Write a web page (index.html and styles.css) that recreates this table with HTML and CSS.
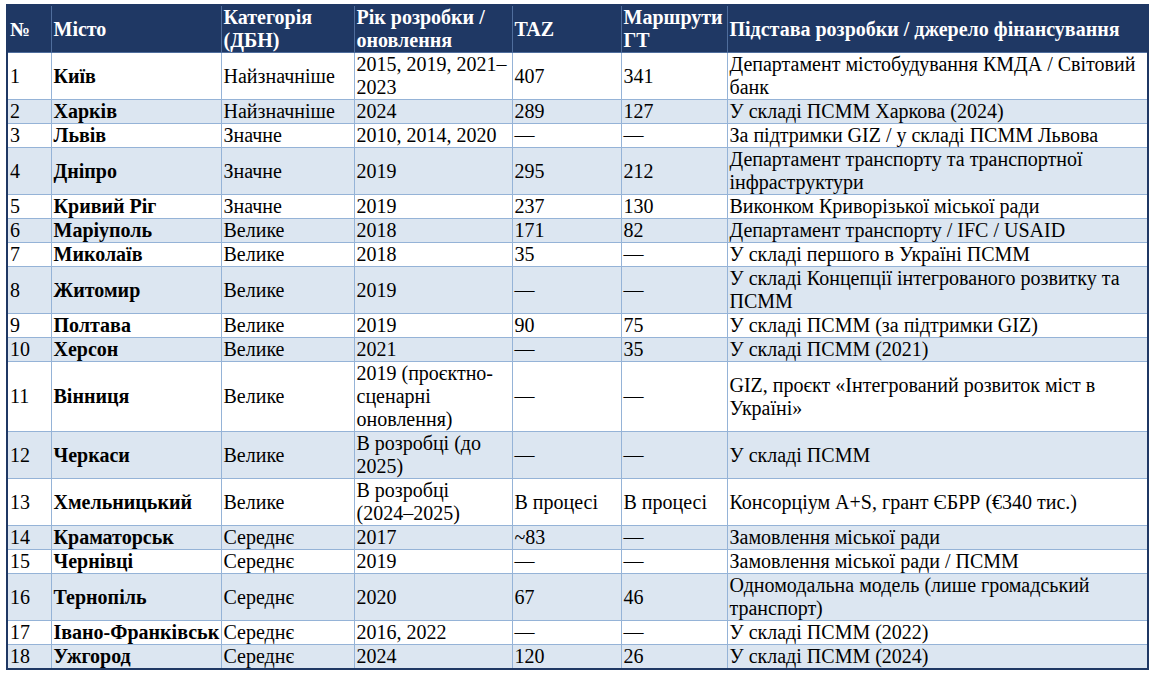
FILE: index.html
```html
<!DOCTYPE html>
<html lang="uk">
<head>
<meta charset="utf-8">
<title>Транспортні моделі міст</title>
<link rel="stylesheet" href="styles.css">
</head>
<body>
<div class="wrap">
<table class="models">
<colgroup>
<col class="c-num"><col class="c-city"><col class="c-cat"><col class="c-year"><col class="c-taz"><col class="c-routes"><col class="c-src">
</colgroup>
<thead>
<tr><th>№</th><th>Місто</th><th>Категорія (ДБН)</th><th>Рік розробки / оновлення</th><th>TAZ</th><th>Маршрути ГТ</th><th>Підстава розробки / джерело фінансування</th></tr>
</thead>
<tbody>
<tr><td>1</td><td class="city">Київ</td><td>Найзначніше</td><td>2015, 2019, 2021–2023</td><td>407</td><td>341</td><td>Департамент містобудування КМДА / Світовий банк</td></tr>
<tr><td>2</td><td class="city">Харків</td><td>Найзначніше</td><td>2024</td><td>289</td><td>127</td><td>У складі ПСММ Харкова (2024)</td></tr>
<tr><td>3</td><td class="city">Львів</td><td>Значне</td><td>2010, 2014, 2020</td><td>—</td><td>—</td><td>За підтримки GIZ / у складі ПСММ Львова</td></tr>
<tr><td>4</td><td class="city">Дніпро</td><td>Значне</td><td>2019</td><td>295</td><td>212</td><td>Департамент транспорту та транспортної інфраструктури</td></tr>
<tr><td>5</td><td class="city">Кривий Ріг</td><td>Значне</td><td>2019</td><td>237</td><td>130</td><td>Виконком Криворізької міської ради</td></tr>
<tr><td>6</td><td class="city">Маріуполь</td><td>Велике</td><td>2018</td><td>171</td><td>82</td><td>Департамент транспорту / IFC / USAID</td></tr>
<tr><td>7</td><td class="city">Миколаїв</td><td>Велике</td><td>2018</td><td>35</td><td>—</td><td>У складі першого в Україні ПСММ</td></tr>
<tr><td>8</td><td class="city">Житомир</td><td>Велике</td><td>2019</td><td>—</td><td>—</td><td>У складі Концепції інтегрованого розвитку та ПСММ</td></tr>
<tr><td>9</td><td class="city">Полтава</td><td>Велике</td><td>2019</td><td>90</td><td>75</td><td>У складі ПСММ (за підтримки GIZ)</td></tr>
<tr><td>10</td><td class="city">Херсон</td><td>Велике</td><td>2021</td><td>—</td><td>35</td><td>У складі ПСММ (2021)</td></tr>
<tr><td>11</td><td class="city">Вінниця</td><td>Велике</td><td>2019 (проєктно-сценарні оновлення)</td><td>—</td><td>—</td><td>GIZ, проєкт «Інтегрований розвиток міст в Україні»</td></tr>
<tr><td>12</td><td class="city">Черкаси</td><td>Велике</td><td>В розробці (до 2025)</td><td>—</td><td>—</td><td>У складі ПСММ</td></tr>
<tr><td>13</td><td class="city">Хмельницький</td><td>Велике</td><td>В розробці (2024–2025)</td><td>В процесі</td><td>В процесі</td><td>Консорціум A+S, грант ЄБРР (€340 тис.)</td></tr>
<tr><td>14</td><td class="city">Краматорськ</td><td>Середнє</td><td>2017</td><td>~83</td><td>—</td><td>Замовлення міської ради</td></tr>
<tr><td>15</td><td class="city">Чернівці</td><td>Середнє</td><td>2019</td><td>—</td><td>—</td><td>Замовлення міської ради / ПСММ</td></tr>
<tr><td>16</td><td class="city">Тернопіль</td><td>Середнє</td><td>2020</td><td>67</td><td>46</td><td>Одномодальна модель (лише громадський транспорт)</td></tr>
<tr><td>17</td><td class="city">Івано-Франківськ</td><td>Середнє</td><td>2016, 2022</td><td>—</td><td>—</td><td>У складі ПСММ (2022)</td></tr>
<tr><td>18</td><td class="city">Ужгород</td><td>Середнє</td><td>2024</td><td>120</td><td>26</td><td>У складі ПСММ (2024)</td></tr>
</tbody>
</table>
</div>
</body>
</html>
```
FILE: styles.css
```css
html, body {
  margin: 0;
  padding: 0;
  background: #ffffff;
}

.wrap {
  padding: 4px 4px 0 6px;
}

.models {
  border-collapse: collapse;
  table-layout: fixed;
  width: 1141px;
  font-family: "Liberation Serif", "Times New Roman", serif;
  font-size: 20px;
  line-height: 23px;
  color: #000000;
  border: 2px solid #1f3864;
}

.c-num { width: 44px; }
.c-city { width: 170px; }
.c-cat { width: 133px; }
.c-year { width: 158px; }
.c-taz { width: 109px; }
.c-routes { width: 106px; }
.c-src { width: 421px; }

.models th,
.models td {
  border: 1px solid #95b3d7;
  padding: 0 1px 0 2px;
  text-align: left;
  vertical-align: middle;
}

.models th {
  background: #1f3864;
  color: #ffffff;
  font-weight: bold;
  border-color: #4f6d9c;
}

.models tbody tr:nth-child(even) td {
  background: #dce6f1;
}

.models td.city {
  font-weight: bold;
  white-space: nowrap;
}
```
